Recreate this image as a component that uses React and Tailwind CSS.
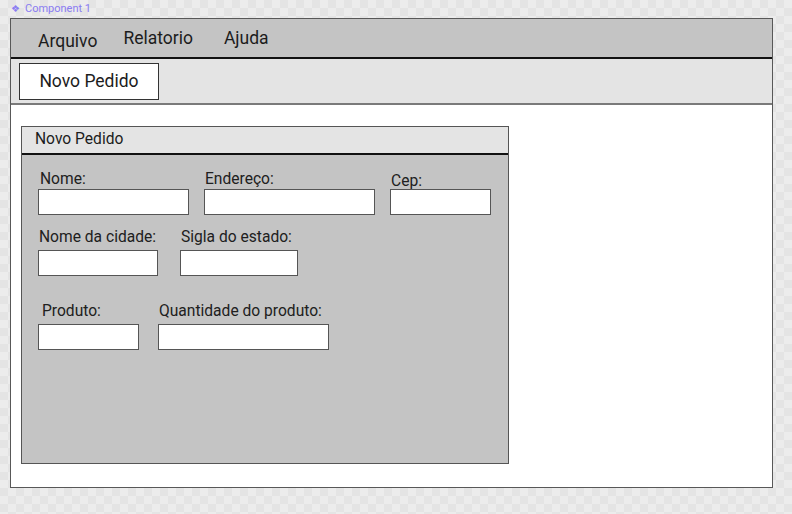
import React from 'react';

const Field = ({ label, width, labelPad = 'pl-[2px]', labelClass = '', inputGap = 'mt-[1px]' }) => (
  <div className="flex flex-col">
    <span className={`text-[15.6px] leading-[18px] h-[18px] text-[#202020] whitespace-nowrap ${labelPad} ${labelClass}`}>
      {label}
    </span>
    <div className={`${inputGap} h-[26px] bg-white border border-[#555]`} style={{ width }} />
  </div>
);

const App = () => {
  return (
    <div
      className="w-[792px] h-[514px] bg-[conic-gradient(#e4e4e4_25%,#ececec_0_50%,#e4e4e4_0_75%,#ececec_0)] bg-[length:16px_16px] overflow-hidden"
      style={{ fontFamily: 'Roboto, "Noto Sans", sans-serif' }}
    >
      <div className="h-[18px] pl-[11px] pt-[2px] text-[11px] leading-[13px] text-[#8a7cf2] flex items-start gap-[5px]">
        <span className="text-[10px]">❖</span>
        <span>Component 1</span>
      </div>

      <div className="ml-[10px] w-[763px] h-[470px] border border-[#585858] bg-white flex flex-col">
        {/* menu bar */}
        <div className="h-[40px] bg-[#c4c4c4] border-b-2 border-[#111] flex items-start pl-[27px] pt-[9px] text-[17.5px] leading-[20px] text-[#1c1c1c]">
          <span className="mt-[3px]">Arquivo</span>
          <span className="ml-[26px]">Relatorio</span>
          <span className="ml-[31px]">Ajuda</span>
        </div>

        {/* toolbar */}
        <div className="h-[46px] bg-[#e4e4e4] border-b-2 border-[#7a7a7a] pl-[8px] pt-[4px]">
          <div className="w-[140px] h-[37px] bg-white border border-[#333] flex items-center justify-center text-[17.5px] text-[#1c1c1c]">
            Novo Pedido
          </div>
        </div>

        {/* content */}
        <div className="flex-1 pl-[10px] pt-[21px]">
          <div className="w-[488px] h-[338px] border border-[#555] bg-[#c4c4c4] flex flex-col">
            <div className="h-[28px] bg-[#e4e4e4] border-b-2 border-[#111] flex items-center pl-[13px] text-[15.6px] text-[#1c1c1c]">
              Novo Pedido
            </div>

            <div className="flex flex-col pl-[16px] pt-[15px]">
              <div className="flex gap-[15px]">
                <Field label="Nome:" width={151} />
                <Field label="Endereço:" width={171} labelPad="pl-[1px]" />
                <Field label="Cep:" width={101} labelPad="pl-[1px]" labelClass="pt-[2px] leading-[16px]" />
              </div>

              <div className="flex gap-[22px] mt-[13px]">
                <Field label="Nome da cidade:" width={120} labelPad="pl-[1px]" inputGap="mt-[4px]" />
                <Field label="Sigla do estado:" width={118} labelPad="pl-[1px]" inputGap="mt-[4px]" />
              </div>

              <div className="flex gap-[19px] mt-[26px]">
                <Field label="Produto:" width={101} labelPad="pl-[4px]" inputGap="mt-[4px]" />
                <Field label="Quantidade do produto:" width={171} labelPad="pl-[1px]" inputGap="mt-[4px]" />
              </div>
            </div>
          </div>
        </div>
      </div>
    </div>
  );
};

export default App;
